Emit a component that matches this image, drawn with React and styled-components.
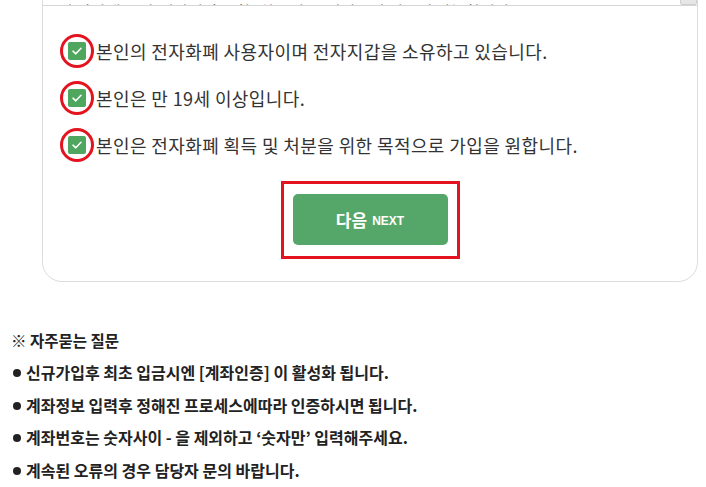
import React from "react";
import styled, { createGlobalStyle } from "styled-components";

const Global = createGlobalStyle`
  html, body { margin: 0; padding: 0; background: #fff; }
  body { font-family: "Noto Sans CJK KR", "Noto Sans", sans-serif; overflow: hidden; }
`;

const Page = styled.div`
  width: 706px;
  height: 487px;
  overflow: hidden;
`;

const Panel = styled.section`
  margin: -40px 8px 0 42px;
  width: 654px;
  border: 1px solid #dcdcdc;
  border-radius: 0 0 20px 20px;
  background: #fff;
  padding-bottom: 22px;
  display: flex;
  flex-direction: column;
`;

const Terms = styled.div`
  position: relative;
  height: 44px;
  border-bottom: 1px solid #d6d6d6;
  overflow: hidden;
  padding: 0 30px 0 15px;
  font-size: 16px;
  line-height: 22px;
  color: #444;
  display: flex;
  flex-direction: column;
  justify-content: flex-end;
`;

const TermsLine = styled.div`
  white-space: nowrap;
  margin-bottom: -17px;
`;

const ScrollThumb = styled.div`
  position: absolute;
  right: 0;
  bottom: 0;
  width: 15px;
  height: 30px;
  background: #e6e6e6;
  border: 1px solid #cfcfcf;
  border-radius: 2px;
`;

const Agreements = styled.div`
  display: flex;
  flex-direction: column;
  padding: 21px 0 0 25px;
`;

const Row = styled.label`
  display: flex;
  align-items: center;
  height: 47px;
  gap: 10px;
  font-size: 18px;
  color: #333;
  letter-spacing: 0.4px;
`;

const BoxWrap = styled.span`
  position: relative;
  width: 18px;
  height: 18px;
  flex: none;
`;

const Box = styled.span`
  display: flex;
  align-items: center;
  justify-content: center;
  width: 18px;
  height: 18px;
  background: #4fa65f;
  border-radius: 2px;
`;

const Ring = styled.span`
  position: absolute;
  left: -8px;
  top: -8px;
  width: 28px;
  height: 28px;
  border: 3px solid #e3141f;
  border-radius: 50%;
`;

const ButtonArea = styled.div`
  display: flex;
  justify-content: center;
  margin-top: 13px;
`;

const Highlight = styled.div`
  border: 3px solid #e3141f;
  padding: 10px 9px 11px;
`;

const NextButton = styled.button`
  width: 155px;
  height: 51px;
  border: none;
  border-radius: 5px;
  background: #55a769;
  color: #fff;
  font-family: "Noto Sans CJK KR", sans-serif;
  font-weight: 700;
  font-size: 17px;
  display: flex;
  align-items: center;
  justify-content: center;
  gap: 5px;
  cursor: pointer;
`;

const Small = styled.span`
  font-family: "Liberation Sans", Arial, sans-serif;
  font-size: 12px;
  font-weight: 700;
  margin-top: 3px;
`;

const Faq = styled.div`
  padding: 42px 0 0 11px;
  display: flex;
  flex-direction: column;
  font-weight: 700;
  font-size: 16px;
  color: #222;
`;

const FaqTitle = styled.div`
  height: 32px;
  line-height: 32px;
  font-size: 15.5px;
`;

const FaqItem = styled.div`
  height: 32.5px;
  line-height: 32.5px;
  white-space: nowrap;
  display: flex;
  align-items: center;
  gap: 5px;
`;

const Dot = styled.span`
  display: inline-block;
  width: 8px;
  height: 8px;
  border-radius: 50%;
  background: #222;
  margin-left: 2px;
  margin-top: 2px;
`;

const Check = () => (
  <svg width="12" height="10" viewBox="0 0 12 10">
    <path d="M2 5.2 L4.8 7.8 L10 2.3" fill="none" stroke="#fff" strokeWidth="1.6" strokeLinecap="round" strokeLinejoin="round" />
  </svg>
);

const items = [
  "본인의 전자화폐 사용자이며 전자지갑을 소유하고 있습니다.",
  "본인은 만 19세 이상입니다.",
  "본인은 전자화폐 획득 및 처분을 위한 목적으로 가입을 원합니다.",
];

const faq = [
  "신규가입후 최초 입금시엔 [계좌인증] 이 활성화 됩니다.",
  "계좌정보 입력후 정해진 프로세스에따라 인증하시면 됩니다.",
  "계좌번호는 숫자사이 - 을 제외하고 ‘숫자만’ 입력해주세요.",
  "계속된 오류의 경우 담당자 문의 바랍니다.",
];

export default function App() {
  return (
    <Page>
      <Global />
      <Panel>
        <Terms>
          <TermsLine>이 약관에 동의(전자지갑 포함) 하시면 본 서비스의 이용이 가능합니다.)</TermsLine>
          <ScrollThumb />
        </Terms>
        <Agreements>
          {items.map((t) => (
            <Row key={t}>
              <BoxWrap>
                <Box><Check /></Box>
                <Ring />
              </BoxWrap>
              {t}
            </Row>
          ))}
        </Agreements>
        <ButtonArea>
          <Highlight>
            <NextButton>다음 <Small>NEXT</Small></NextButton>
          </Highlight>
        </ButtonArea>
      </Panel>
      <Faq>
        <FaqTitle>※ 자주묻는 질문</FaqTitle>
        {faq.map((f) => (
          <FaqItem key={f}><Dot />{f}</FaqItem>
        ))}
      </Faq>
    </Page>
  );
}
